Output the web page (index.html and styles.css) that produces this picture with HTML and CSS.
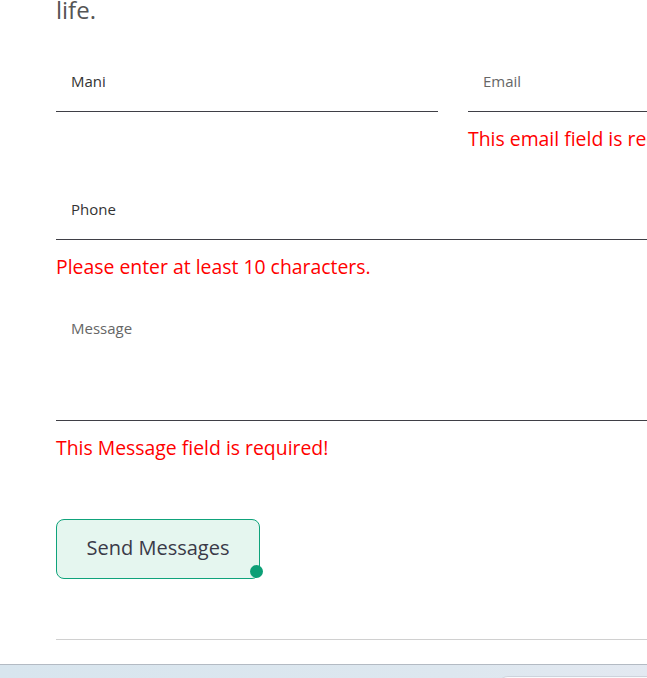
FILE: index.html
```html
<!DOCTYPE html>
<html lang="en">
<head>
<meta charset="utf-8">
<title>Contact</title>
<link rel="stylesheet" href="styles.css">
</head>
<body>
<div class="page">
  <section class="contact">
    <p class="intro">life.</p>
    <form class="form" onsubmit="return false">
      <div class="row">
        <div class="field">
          <input class="input filled" type="text" value="Mani">
        </div>
        <div class="field">
          <input class="input" type="email" placeholder="Email">
          <div class="error">This email field is required!</div>
        </div>
      </div>
      <div class="field">
        <input class="input filled" type="tel" value="Phone">
        <div class="error">Please enter at least 10 characters.</div>
      </div>
      <div class="field">
        <textarea class="input textarea" placeholder="Message"></textarea>
        <div class="error">This Message field is required!</div>
      </div>
      <div class="actions">
        <button class="send" type="submit">Send Messages<span class="dot"></span></button>
      </div>
    </form>
    <hr class="rule">
  </section>
  <div class="footer-band"><div class="footer-tab"></div></div>
</div>
</body>
</html>
```
FILE: styles.css
```css
* { box-sizing: border-box; }
html, body { margin: 0; padding: 0; background: #fff; }
body {
  font-family: "Open Sans", "Noto Sans", sans-serif;
  color: #333;
  overflow: hidden;
  width: 647px;
  height: 678px;
}
.page { width: 900px; }
.contact { padding-left: 56px; }
.intro {
  margin: -8px 0 0;
  font-size: 24px;
  line-height: 36px;
  color: #555;
}
.form {
  display: flex;
  flex-direction: column;
  gap: 26px;
  margin-top: 22px;
}
.row {
  display: grid;
  grid-template-columns: 382px 382px;
  column-gap: 30px;
}
.field { display: flex; flex-direction: column; }
.input {
  display: block;
  width: 100%;
  height: 62px;
  padding: 0 15px;
  border: 0;
  border-bottom: 1px solid #3f3f46;
  outline: none;
  background: transparent;
  font-family: inherit;
  font-size: 15px;
  color: #333;
}
.input::placeholder { color: #666; opacity: 1; }
.textarea {
  height: 115px;
  padding-top: 12px;
  resize: none;
}
.error {
  margin-top: 13px;
  font-size: 19.4px;
  line-height: 27px;
  color: #ff0000;
  white-space: nowrap;
}
.actions { margin-top: 32px; }
.send {
  position: relative;
  width: 204px;
  height: 60px;
  padding: 0 0 3px;
  border: 1px solid #0fa37b;
  border-radius: 8px;
  background: #e5f6ef;
  font-family: inherit;
  font-size: 20px;
  color: #3a3a48;
  cursor: pointer;
}
.dot {
  position: absolute;
  right: -4px;
  bottom: 0;
  width: 13px;
  height: 13px;
  border-radius: 50%;
  background: #0c9f76;
}
.rule {
  margin: 60px 0 0;
  border: 0;
  border-top: 1px solid #d0d0d0;
}
.footer-band {
  margin-top: 24px;
  height: 40px;
  border-top: 1px solid #b3bac3;
  background: linear-gradient(90deg, #d8e5ee 0%, #dde7ef 50%, #ebebf4 100%);
  padding-top: 11px;
  padding-left: 498px;
}
.footer-tab {
  width: 300px;
  height: 30px;
  background: #fafafc;
  border-top: 1px solid #cdd3dc;
  border-radius: 10px 0 0 0;
}
```
